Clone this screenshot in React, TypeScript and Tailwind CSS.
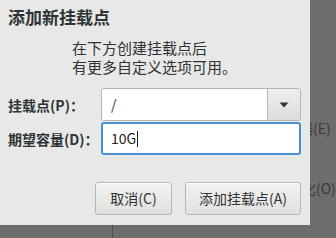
import React from "react";

const font = { fontFamily: '"Noto Sans CJK SC", "Noto Sans", sans-serif' };

function DropArrow() {
  return (
    <svg width="10" height="6" viewBox="0 0 10 6">
      <path d="M0.5 0.5 L9.5 0.5 L5 5.5 Z" fill="#2e3436" />
    </svg>
  );
}

export default function App() {
  return (
    <div className="relative w-[336px] h-[238px] overflow-hidden bg-[#6d6d6d]" style={font}>
      {/* dimmed window behind the dialog */}
      <div className="absolute left-[299px] top-[118px] text-[14px] leading-[20px] text-[#3a3a3a] whitespace-nowrap">
        器(E)
      </div>
      <div className="absolute left-[302px] top-[178px] text-[14px] leading-[20px] text-[#3a3a3a] whitespace-nowrap">
        化(O)
      </div>
      <div className="absolute left-[112px] top-[225px] w-px h-[13px] bg-[#4f4f4f]" />

      {/* dialog */}
      <div className="absolute left-0 top-0 w-[310px] h-[225px] bg-[#e8e8e7] flex flex-col pl-[8px] pr-[9px] pt-[7px] text-[#2e3436]">
        <h2 className="text-[17px] leading-[20px] font-bold">添加新挂载点</h2>

        <div className="ml-[64px] mt-[11px] text-[15px] leading-[19px]">
          <p>在下方创建挂载点后</p>
          <p>有更多自定义选项可用。</p>
        </div>

        <div className="mt-[12px] grid grid-cols-[93px_200px] gap-y-[1px] items-center">
          <label className="text-[14px] font-bold leading-[20px]">挂载点(P)：</label>
          <div className="flex h-[33px] rounded-[3px] border border-[#b6b6b3] overflow-hidden">
            <div className="flex-1 bg-white flex items-center pl-[9px] text-[14px]">/</div>
            <div className="w-[33px] border-l border-[#b6b6b3] bg-gradient-to-b from-[#efefee] to-[#dcdcda] flex items-center justify-center">
              <DropArrow />
            </div>
          </div>

          <label className="text-[14px] font-bold leading-[20px]">期望容量(D)：</label>
          <div className="h-[33px] rounded-[3px] border-2 border-[#4a90d9] bg-white flex items-center pl-[8px] text-[14px] text-[#1d1d1d]">
            <span>10G</span>
            <span className="ml-[1px] w-px h-[16px] bg-[#1d1d1d]" />
          </div>
        </div>

        <div className="mt-[27px] flex justify-end gap-[13px]">
          <button className="w-[77px] h-[33px] rounded-[3px] border border-[#b6b6b3] bg-gradient-to-b from-[#f2f2f1] to-[#e0e0de] text-[14px] text-[#2e3436] shadow-[inset_0_1px_0_#ffffff]">
            取消(C)
          </button>
          <button className="w-[116px] h-[33px] rounded-[3px] border border-[#b6b6b3] bg-gradient-to-b from-[#f2f2f1] to-[#e0e0de] text-[14px] text-[#2e3436] shadow-[inset_0_1px_0_#ffffff]">
            添加挂载点(A)
          </button>
        </div>
      </div>
    </div>
  );
}
